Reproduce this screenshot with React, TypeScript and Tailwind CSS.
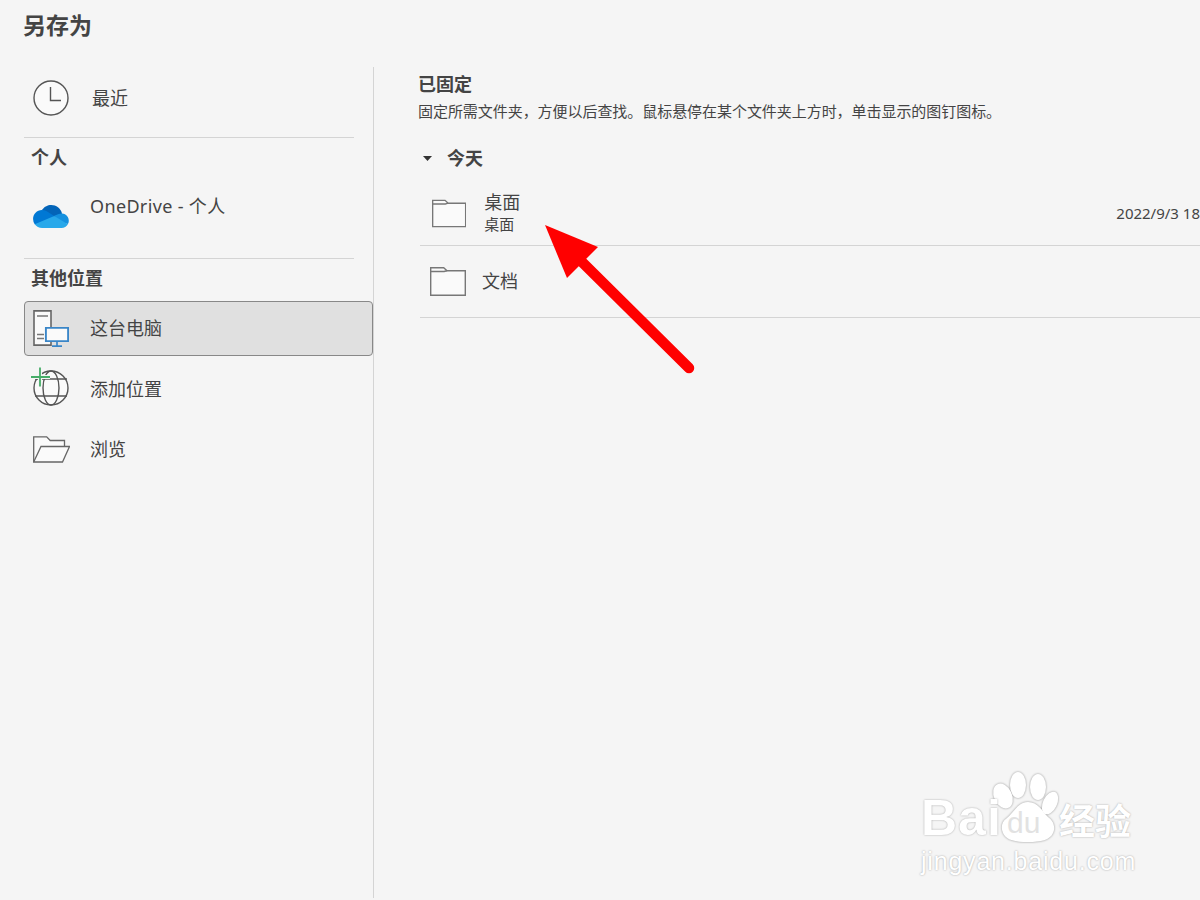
import React from 'react';

function ClockIcon() {
    return (
        <svg width="36" height="36" viewBox="0 0 36 36" fill="none" stroke="#555" strokeWidth="1.4">
            <circle cx="18" cy="18" r="17" fill="#fafafa" />
            <path d="M17.5 7v13.5h10.5" />
        </svg>
    );
}

function OneDriveIcon() {
    return (
        <svg width="36" height="23" viewBox="0 0 1033.44 663">
            <path d="M622.292 445.338l212.613-203.327C790.741 69.804 615.338-33.996 443.13 10.168a321.9 321.9 0 0 0-188.92 134.837c3.29-.083 368.082 300.333 368.082 300.333z" fill="#0364b8" />
            <path d="M392.776 183.283l-.01.035c-40.632-25.167-87.488-38.48-135.281-38.426-1.104 0-2.176.07-3.28.083C112.063 146.766-1.814 263.274.02 405.416a259.08 259.08 0 0 0 46.986 146.499l318.417-39.899 244.135-196.859z" fill="#0078d4" />
            <path d="M834.905 242.012c-4.674-.312-9.37-.528-14.123-.528a207.799 207.799 0 0 0-82.91 17.221l-.006-.022-128.807 54.2 141.998 175.393 253.856 61.783c54.782-101.693 16.823-228.547-84.87-283.33a209.075 209.075 0 0 0-85.138-24.717z" fill="#1490df" />
            <path d="M46.999 551.905C95.638 621.529 175.22 662.99 260.15 662.828h560.632c76.487.022 146.79-42.033 182.948-109.438L609.564 315.32z" fill="#28a8ea" />
        </svg>
    );
}

function ComputerIcon() {
    return (
        <svg width="36" height="37" viewBox="0 0 36 37" fill="none">
            <path d="M1 .9h17v34.2H1z" fill="#fafafa" stroke="#666" strokeWidth="1.6" />
            <path d="M4 6h11M4 24.5h7M4 28.5h7" stroke="#777" strokeWidth="1.4" />
            <path d="M12.9 17.9h22.2v13.2H12.9z" fill="#fafafa" stroke="#3a86c8" strokeWidth="1.9" />
            <path d="M24 31.5v4.5M19 36.2h10" stroke="#3a86c8" strokeWidth="1.7" />
        </svg>
    );
}

function GlobePlusIcon() {
    return (
        <svg width="36" height="36" viewBox="0 0 36 36" fill="none" className="-mt-[2px] overflow-visible">
            <g stroke="#555" strokeWidth="1.4">
                <circle cx="18" cy="18" r="17" fill="#fafafa" />
                <ellipse cx="18" cy="18" rx="8" ry="17" />
                <path d="M2 9h32M2 26h32" />
            </g>
            <path d="M-2 7h19M7 -2.5v19" stroke="#f5f5f5" strokeWidth="4" />
            <path d="M-2 7h19M7 -2.5v19" stroke="#46ad68" strokeWidth="1.8" />
        </svg>
    );
}

function OpenFolderIcon() {
    return (
        <svg width="37" height="27" viewBox="0 0 37 27" fill="none" stroke="#666" strokeWidth="1.3" strokeLinejoin="miter">
            <path d="M.7 26V.8h13l3.5 3.7h14.3V10" fill="#fafafa" />
            <path d="M.7 26 8 10.5h28.5L29.5 26z" fill="#fafafa" />
        </svg>
    );
}

function FolderIcon() {
    return (
        <svg width="36" height="29" viewBox="0 0 36 29" fill="none" stroke="#777" strokeWidth="1.4">
            <path d="M.7.7h13l3.3 3h18.3v24.6H.7z" fill="#fafafa" />
            <path d="M.7 4.5h13.3l3-.8" />
        </svg>
    );
}

function Divider() {
    return <div className="h-px w-[330px] bg-[#d4d4d4]" />;
}

function SectionLabel({ children }: { children: React.ReactNode }) {
    return <div className="flex h-[38px] items-center pl-[7px] text-[18px] font-bold text-[#444]">{children}</div>;
}

function RedArrow() {
    return (
        <svg className="absolute left-[540px] top-[220px]" width="160" height="160" viewBox="540 220 160 160">
            <path d="M545 225 598 247 586 259 579 266 567 278z" fill="#ff0000" />
            <path d="M580 260 689 368" stroke="#ff0000" strokeWidth="10.5" strokeLinecap="round" />
        </svg>
    );
}

function Watermark() {
    return (
        <div className="absolute left-[900px] top-[760px] h-[130px] w-[260px] text-white">
            <svg className="absolute left-0 top-0 drop-shadow-[0_0_1px_rgba(0,0,0,0.4)]" width="260" height="130" viewBox="0 0 260 130" fill="#ffffff">
                <ellipse cx="103" cy="36" rx="9" ry="13" transform="rotate(-25 103 36)" />
                <ellipse cx="118" cy="25" rx="8" ry="13" />
                <ellipse cx="138" cy="27" rx="8" ry="13" />
                <ellipse cx="150" cy="43" rx="7" ry="12" transform="rotate(25 150 43)" />
                <path d="M128 42c10 0 14 9 20 15 7 5 7 12 5 16-3 7-12 9-25 9s-22-2-25-9c-2-5-2-11 4-15 7-6 11-16 21-16z" />
            </svg>
            <span className="absolute left-[21px] top-[33px] font-['Liberation_Sans',sans-serif] text-[50px] font-bold leading-[50px] tracking-[1px] [text-shadow:0_0_2px_rgba(0,0,0,0.35)]">Bai</span>
            <span className="absolute left-[107px] top-[46px] font-['Liberation_Sans',sans-serif] text-[30px] leading-[34px] text-[#e2e2e2]">du</span>
            <span className="absolute left-[159px] top-[40px] text-[36px] font-bold leading-[44px] [text-shadow:0_0_2px_rgba(0,0,0,0.35)]">经验</span>
            <span className="absolute left-[21px] top-[87px] font-['Liberation_Sans',sans-serif] text-[25px] leading-[28px] tracking-[0.8px] [text-shadow:0_0_2px_rgba(0,0,0,0.35)]">jingyan.baidu.com</span>
        </div>
    );
}

export default function App() {
    return (
        <div className="relative h-[900px] w-[1200px] overflow-hidden bg-[#f5f5f5] font-['Noto_Sans','Noto_Sans_CJK_SC',sans-serif] text-[#444]">
            <header className="flex h-[67px] items-start pl-[23px] pt-[7px] text-[23px] font-bold leading-[36px]">另存为</header>

            <div className="flex h-[831px]">
                <aside className="w-[374px] shrink-0 border-r border-[#d4d4d4] pl-6">
                    <div className="flex h-[62px] items-center pl-[9px]">
                        <ClockIcon />
                        <span className="ml-[23px] text-[18px]">最近</span>
                    </div>
                    <div className="mt-2">
                        <Divider />
                    </div>
                    <SectionLabel>个人</SectionLabel>
                    <div className="relative h-[82px] pl-[9px]">
                        <div className="flex items-start">
                            <div className="mt-[29px]">
                                <OneDriveIcon />
                            </div>
                            <span className="ml-[21px] mt-[16px] text-[18px] leading-[28px] tracking-[0.35px]">OneDrive - 个人</span>
                        </div>
                    </div>
                    <Divider />
                    <SectionLabel>其他位置</SectionLabel>
                    <div className="mt-1 flex h-[55px] w-[349px] items-center rounded-[4px] border border-[#888] bg-[#e0e0e0] pl-2">
                        <ComputerIcon />
                        <span className="ml-[21px] text-[18px]">这台电脑</span>
                    </div>
                    <div className="mt-[3px] flex h-[60px] items-center pl-[9px]">
                        <GlobePlusIcon />
                        <span className="ml-[21px] text-[18px]">添加位置</span>
                    </div>
                    <div className="flex h-[60px] items-center pl-[9px]">
                        <OpenFolderIcon />
                        <span className="ml-5 text-[18px]">浏览</span>
                    </div>
                </aside>

                <main className="min-w-0 flex-1 pl-[44px] pt-1">
                    <h2 className="text-[18px] font-bold leading-[26px]">已固定</h2>
                    <p className="mt-[3px] whitespace-nowrap text-[15px] leading-[22px] tracking-[-0.05px]">固定所需文件夹，方便以后查找。鼠标悬停在某个文件夹上方时，单击显示的图钉图标。</p>
                    <div className="mt-[23px] flex h-[26px] items-center pl-[5px]">
                        <svg width="9" height="5" viewBox="0 0 9 5" fill="#333">
                            <path d="M0 0h9L4.5 5z" />
                        </svg>
                        <span className="ml-[15px] text-[18px] font-bold">今天</span>
                    </div>

                    <div className="ml-[2px] flex h-[75px] items-center border-b border-[#d4d4d4] pl-3 pt-[10px]">
                        <FolderIcon />
                        <div className="-mt-[2px] ml-[18px] flex shrink-0 flex-col whitespace-nowrap">
                            <span className="text-[18px] leading-[24px]">桌面</span>
                            <span className="text-[15px] leading-[20px]">桌面</span>
                        </div>
                        <span className="ml-[596px] shrink-0 whitespace-nowrap text-[15px]">2022/9/3 18</span>
                    </div>
                    <div className="ml-[2px] flex h-[72px] items-center border-b border-[#d4d4d4] pl-[10px]">
                        <FolderIcon />
                        <span className="ml-[16px] text-[18px]">文档</span>
                    </div>
                </main>
            </div>

            <RedArrow />
            <Watermark />
        </div>
    );
}
